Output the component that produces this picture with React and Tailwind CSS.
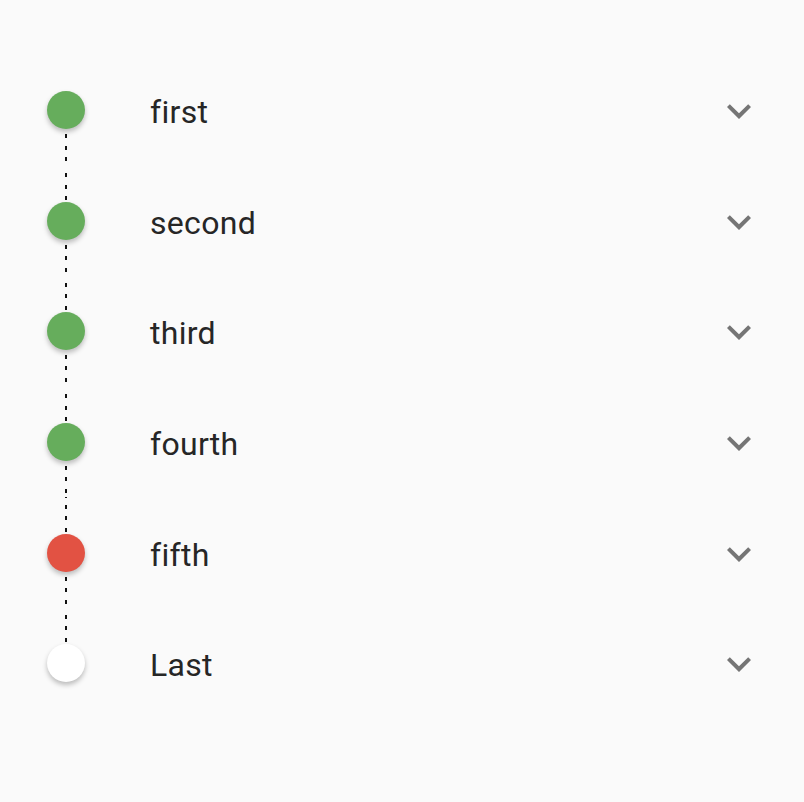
import React from "react";

const items = [
  { label: "first", color: "bg-[#66ad5c]" },
  { label: "second", color: "bg-[#66ad5c]" },
  { label: "third", color: "bg-[#66ad5c]" },
  { label: "fourth", color: "bg-[#66ad5c]" },
  { label: "fifth", color: "bg-[#e25243]" },
  { label: "Last", color: "bg-white" },
];

function Dots({ show, top }) {
  return (
    <div
      className={`flex-1 w-[2px] ${
        show
          ? top
            ? "bg-[repeating-linear-gradient(to_top,transparent_0_2px,#111_2px_6px,transparent_6px_11.5px)]"
            : "bg-[repeating-linear-gradient(to_bottom,transparent_0_5px,#111_5px_9px,transparent_9px_11.5px)]"
          : ""
      }`}
    />
  );
}

export default function App() {
  return (
    <div className="w-[804px] h-[802px] bg-[#fafafa] pt-[55px] font-['Roboto',sans-serif]">
      {items.map((it, i) => (
        <div key={i} className="h-[110.6px] flex items-stretch pl-[47px] pr-[41px]">
          <div className="w-[38px] flex flex-col items-center">
            <Dots show={i > 0} top />
            <div className={`w-[38px] h-[38px] rounded-full shrink-0 ${it.color} shadow-[0_3px_5px_rgba(0,0,0,0.25)]`} />
            <Dots show={i < items.length - 1} />
          </div>
          <div className="flex-1 flex items-center pt-[4px] ml-[65px] text-[32px] tracking-[0.3px] text-[#262626] leading-none">
            {it.label}
          </div>
          <div className="flex items-center pt-[2px]">
            <svg width="48" height="48" viewBox="0 0 24 24" fill="#757575">
              <path d="M16.59 8.59L12 13.17 7.41 8.59 6 10l6 6 6-6z" />
            </svg>
          </div>
        </div>
      ))}
    </div>
  );
}
